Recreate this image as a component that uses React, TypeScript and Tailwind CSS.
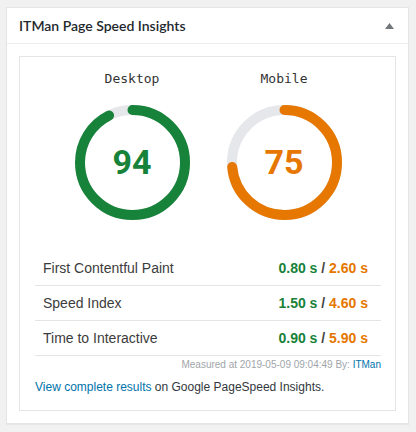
import React from 'react';

const GREEN = '#178239';
const ORANGE = '#e67700';

interface GaugeProps {
  label: string;
  score: number;
  color: string;
}

function Gauge({ label, score, color }: GaugeProps) {
  const r = 52.5;
  const circ = 2 * Math.PI * r;
  const dash = (score / 100) * circ - 5;

  return (
    <div className="w-[152px] flex flex-col items-center">
      <div className="h-[18px] leading-[18px] text-[13px] text-[#333] font-['DejaVu_Sans_Mono',monospace]">
        {label}
      </div>
      <div className="relative mt-[17px] w-[115px] h-[115px]">
        <svg width="115" height="115" viewBox="0 0 115 115" className="-rotate-90">
          <circle cx="57.5" cy="57.5" r={r} fill="none" stroke="#e6e7ea" strokeWidth="10" />
          <circle
            cx="57.5"
            cy="57.5"
            r={r}
            fill="none"
            stroke={color}
            strokeWidth="10"
            strokeLinecap="round"
            strokeDasharray={`${dash} ${circ}`}
          />
        </svg>
        <div
          className="absolute inset-0 flex items-center justify-center text-[34px] font-bold font-['Roboto',sans-serif]"
          style={{ color }}
        >
          {score}
        </div>
      </div>
    </div>
  );
}

const metrics = [
  { name: 'First Contentful Paint', desktop: '0.80 s', mobile: '2.60 s' },
  { name: 'Speed Index', desktop: '1.50 s', mobile: '4.60 s' },
  { name: 'Time to Interactive', desktop: '0.90 s', mobile: '5.90 s' },
];

export default function App() {
  return (
    <div className="w-[416px] h-[432px] bg-[#f1f1f1] pt-[7px] pl-[6px] font-['Liberation_Sans',Arial,sans-serif]">
      <div className="w-[403px] bg-white border border-[#e5e5e5] shadow-[0_1px_1px_rgba(0,0,0,0.04)]">
        <div className="h-[36px] border-b border-[#eeeeee] flex items-center justify-between pl-3 pr-[14px]">
          <h2 className="text-[14px] font-semibold text-[#23282d] font-['Lato',sans-serif]">
            ITMan Page Speed Insights
          </h2>
          <svg width="9" height="6" viewBox="0 0 9 6">
            <polygon points="4.5,0 9,6 0,6" fill="#72777c" />
          </svg>
        </div>

        <div className="p-3">
          <div className="border border-[#e5e5e5] pt-[13px] pl-[15px] pr-[14px] pb-[15px]">
            <div className="flex justify-center">
              <Gauge label="Desktop" score={94} color={GREEN} />
              <Gauge label="Mobile" score={75} color={ORANGE} />
            </div>

            <div className="mt-[31px]">
              {metrics.map((m) => (
                <div
                  key={m.name}
                  className="h-[35px] border-b border-[#e5e5e5] flex items-center justify-between pl-2 pr-[13px] text-[14px]"
                >
                  <span className="text-[#3c3c3c]">{m.name}</span>
                  <span className="font-bold text-[#444]">
                    <span className="text-[#178239]">{m.desktop}</span>
                    {' / '}
                    <span className="text-[#e67700]">{m.mobile}</span>
                  </span>
                </div>
              ))}
            </div>

            <div className="mt-[2px] text-right text-[10px] leading-[14px] text-[#a0a5aa]">
              Measured at 2019-05-09 09:04:49 By: <a className="text-[#0073aa]">ITMan</a>
            </div>

            <div className="mt-[7px] text-[12px] leading-[16px] text-[#32373c]">
              <a className="text-[#0073aa]">View complete results</a> on Google PageSpeed Insights.
            </div>
          </div>
        </div>
      </div>
    </div>
  );
}
